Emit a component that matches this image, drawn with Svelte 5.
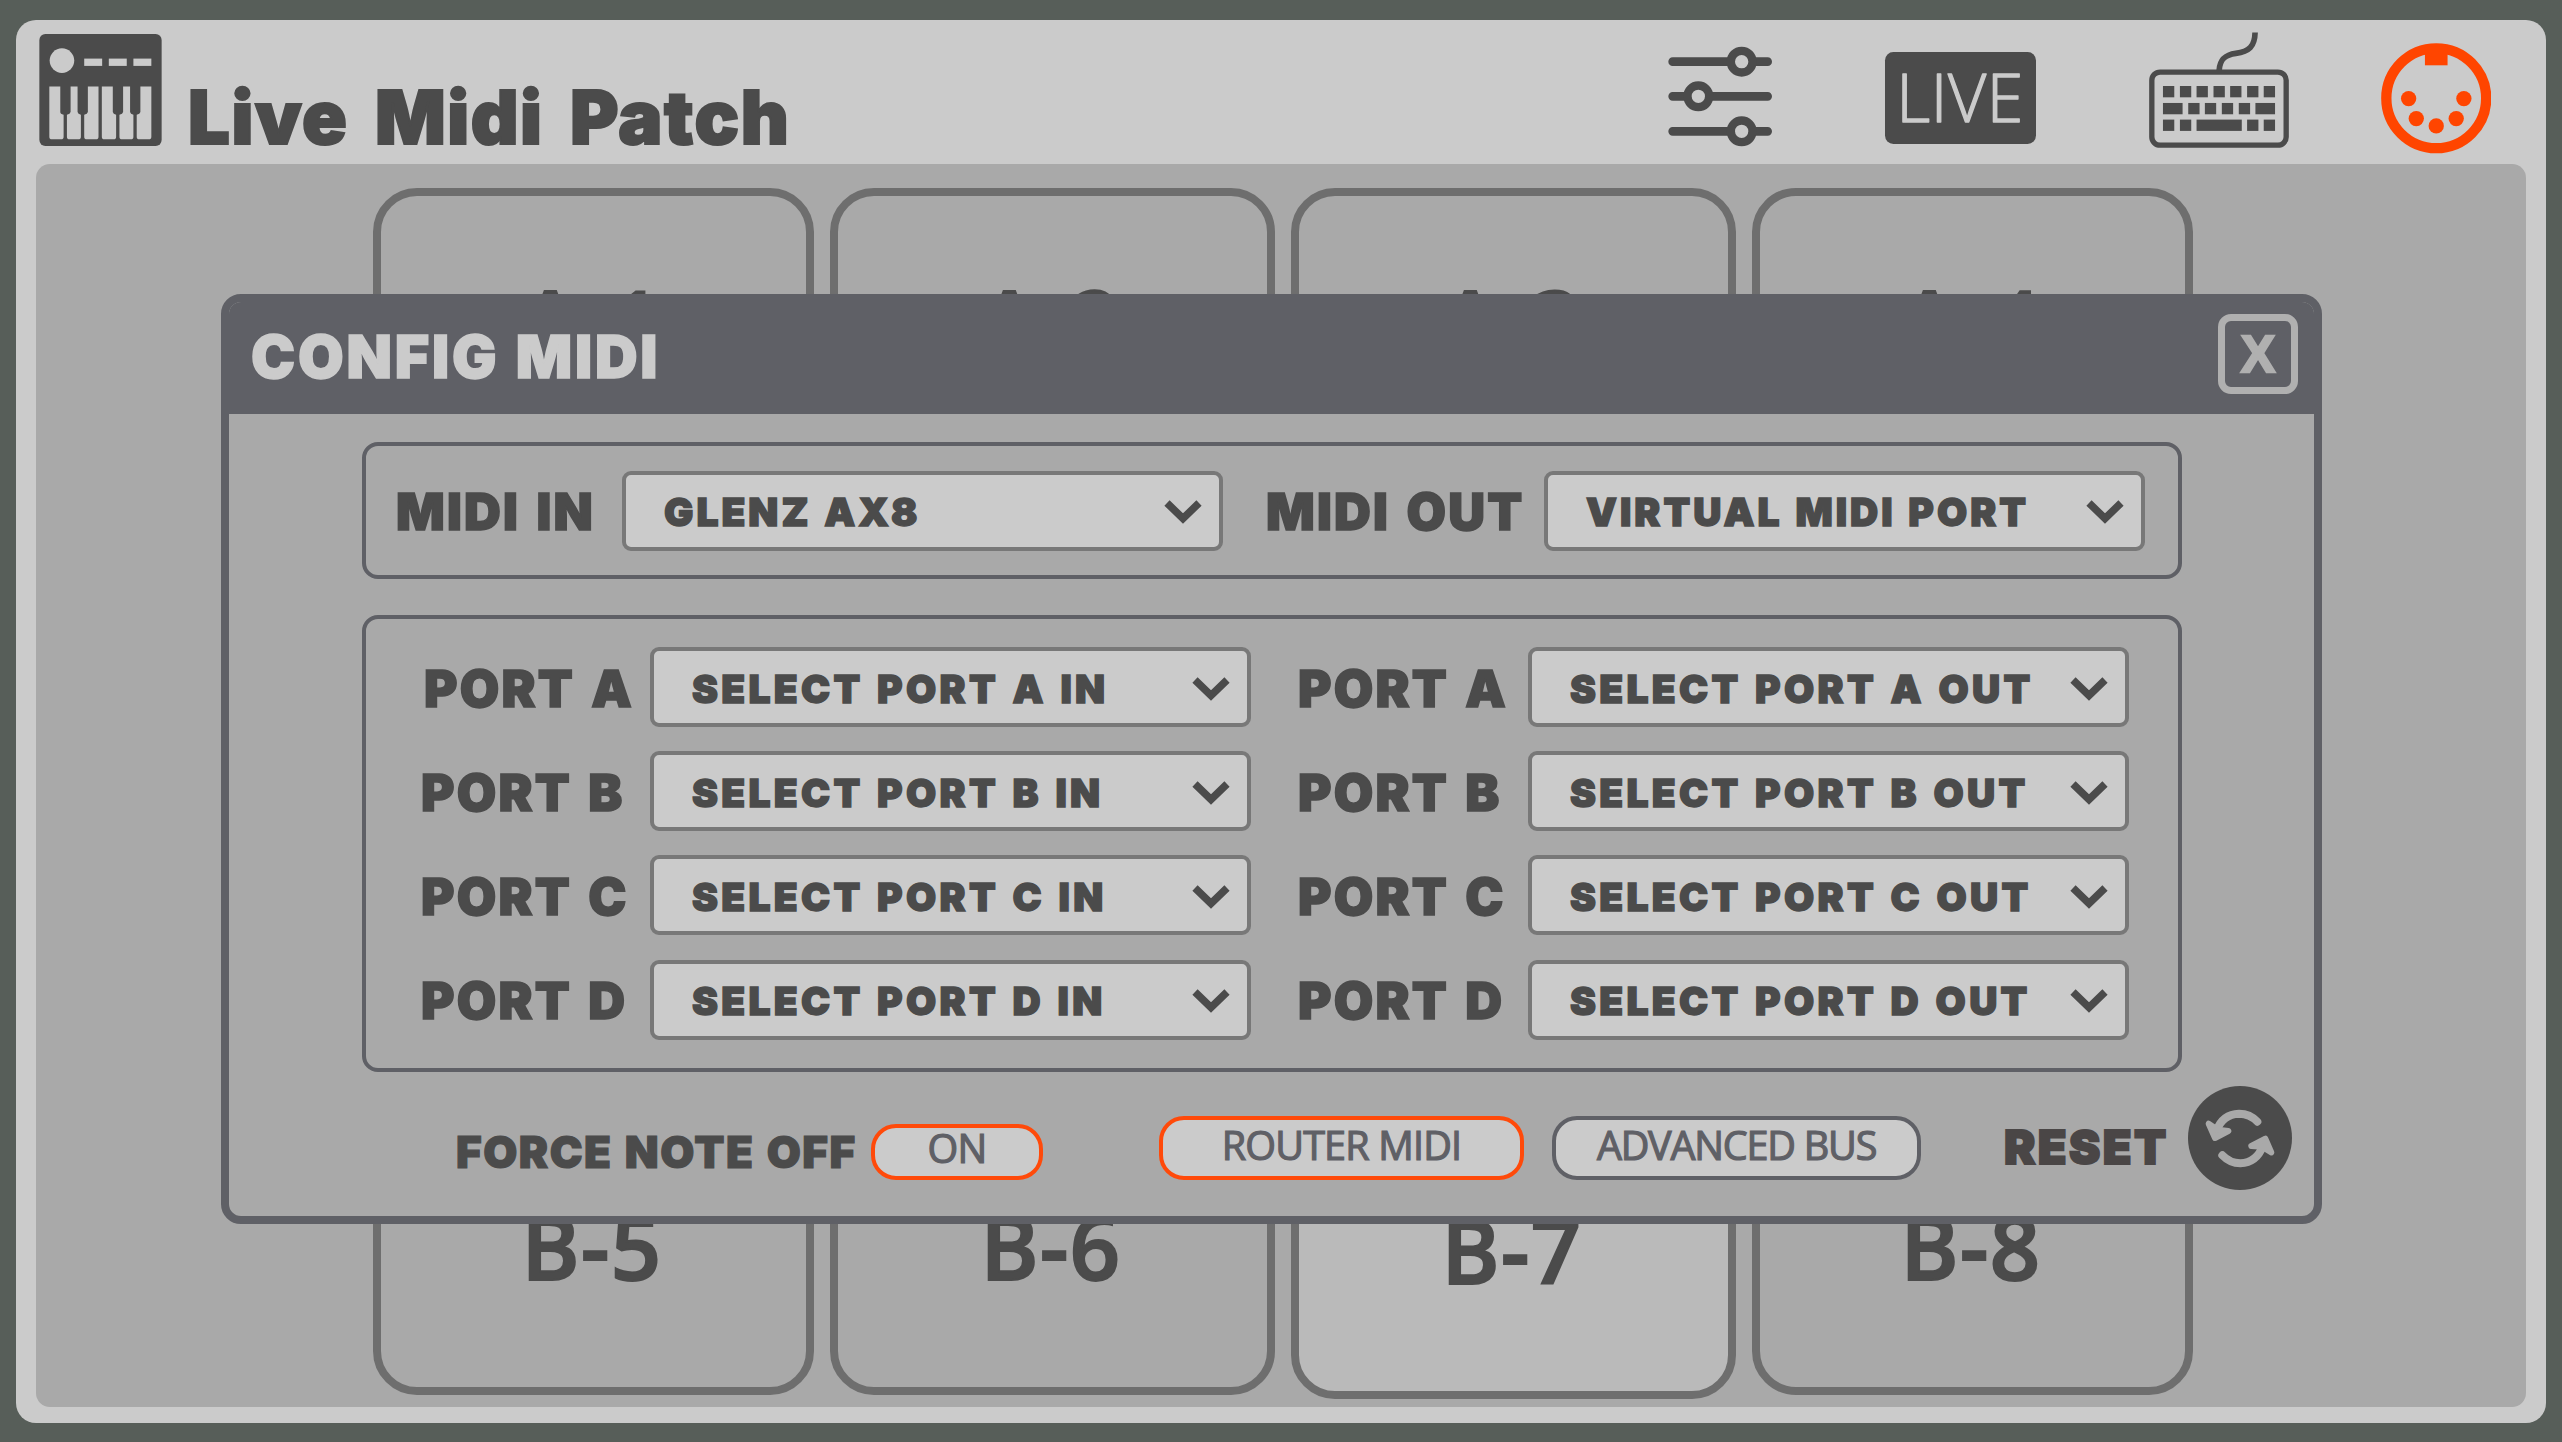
<script>
  const pads = [
    'A-1', 'A-2', 'A-3', 'A-4',
    'A-5', 'A-6', 'A-7', 'A-8',
    'B-1', 'B-2', 'B-3', 'B-4',
    'B-5', 'B-6', 'B-7', 'B-8',
  ];
  const ports = ['A', 'B', 'C', 'D'];

  let activePad = 'B-7';
  let midiIn = 'GLENZ AX8';
  let midiOut = 'VIRTUAL MIDI PORT';
  let forceNoteOff = true;
  let mode = 'router';
  let showConfig = true;

  // keyboard icon keys: x, y, width
  const keys = [
    [129, 197, 34], [180, 197, 34], [230, 197, 34], [281, 197, 34], [331, 197, 34], [382, 197, 34], [432, 197, 34],
    [129, 248, 59], [205, 248, 34], [255, 248, 34], [306, 248, 34], [357, 248, 34], [407, 248, 59],
    [129, 298, 34], [180, 298, 34], [230, 298, 136], [382, 298, 34], [432, 298, 34],
  ];
  const pins = [[864, 235], [887, 295], [947, 317], [1007, 295], [1030, 235]];
</script>

{#snippet select(text)}
  <button class="select">
    <span>{text}</span>
    <svg class="chevron" viewBox="0 0 38 25">
      <path d="M3 4 L19 19.5 L35 4" fill="none" stroke="#4b4b4b" stroke-width="7.5" />
    </svg>
  </button>
{/snippet}

<div class="page">
  <div class="app">
    <header>
      <svg class="logo" viewBox="58 41 368 337">
        <rect x="58" y="41" width="368" height="337" rx="18" fill="#4b4b4b" />
        <g fill="#cbcbcb">
          <circle cx="126" cy="121" r="37" />
          <rect x="193" y="115" width="54" height="22" />
          <rect x="267" y="115" width="54" height="22" />
          <rect x="341" y="115" width="54" height="22" />
          <path d="M88 199H121V276Q121 282 131 284V350Q131 358 123 358H96Q88 358 88 350Z" />
          <path d="M152 199H173V276Q174 282 183 284V350Q183 358 175 358H149Q141 358 141 350V284Q151 282 152 276Z" />
          <path d="M204 199H236V350Q236 358 228 358H201Q193 358 193 350V284Q203 282 204 276Z" />
          <path d="M246 199H279V276Q280 282 289 284V350Q289 358 281 358H254Q246 358 246 350Z" />
          <path d="M310 199H331V276Q332 282 341 284V350Q341 358 333 358H307Q299 358 299 350V284Q309 282 310 276Z" />
          <path d="M362 199H395V350Q395 358 387 358H359Q351 358 351 350V284Q361 282 362 276Z" />
        </g>
      </svg>
      <h1>Live Midi Patch</h1>

      <nav>
        <svg class="sliders" viewBox="54 77 312 303">
          <g stroke="#4b4b4b" stroke-width="26" stroke-linecap="round">
            <path d="M68 124H353M68 228H353M68 333H353" />
          </g>
          <g fill="#cbcbcb" stroke="#4b4b4b" stroke-width="25">
            <circle cx="275" cy="124" r="32.5" />
            <circle cx="145" cy="228" r="32.5" />
            <circle cx="275" cy="333" r="32.5" />
          </g>
        </svg>
        <svg class="live" viewBox="706 97 452 275">
          <rect x="706" y="97" width="452" height="275" rx="25" fill="#4b4b4b" />
          <text x="740" y="306" textLength="380" lengthAdjust="spacing">LIVE</text>
        </svg>
        <svg class="keyboard" viewBox="87 35 421 348">
          <rect x="95.500" y="155" width="404" height="220" rx="25" fill="none" stroke="#4b4b4b" stroke-width="16" />
          <path d="M298 150C300 115 318 103 348 99C388 94 405 78 406 36" fill="none" stroke="#4b4b4b" stroke-width="17" />
          {#each keys as [x, y, w]}
            <rect {x} {y} width={w} height="34" fill="#4b4b4b" />
          {/each}
        </svg>
        <svg class="din" viewBox="781 68 332 332">
          <circle cx="947" cy="234" r="150" fill="none" stroke="#ff4500" stroke-width="31" />
          <rect x="913" y="80" width="68" height="55" fill="#ff4500" />
          {#each pins as [cx, cy]}
            <circle {cx} {cy} r="23" fill="#ff4500" />
          {/each}
        </svg>
      </nav>
    </header>

    <main>
      <div class="pads">
        {#each pads as pad}
          <div class="pad" class:active={pad === activePad}>{pad}</div>
        {/each}
      </div>
    </main>
  </div>

  {#if showConfig}
    <div class="dialog">
      <div class="dialog-head">
        <h2>CONFIG MIDI</h2>
        <button class="close" on:click={() => (showConfig = false)}>X</button>
      </div>

      <div class="dialog-body">
        <section class="group main-ports">
          <span class="label">MIDI IN</span>
          {@render select(midiIn)}
          <span class="label out">MIDI OUT</span>
          {@render select(midiOut)}
        </section>

        <section class="group ports">
          {#each ports as port}
            <span class="label" class:first={port === 'A'}>PORT {port}</span>
            {@render select(`SELECT PORT ${port} IN`)}
            <span class="label out">PORT {port}</span>
            {@render select(`SELECT PORT ${port} OUT`)}
          {/each}
        </section>

        <footer>
          <span class="force">FORCE NOTE OFF</span>
          <button class="pill toggle" class:on={forceNoteOff} on:click={() => (forceNoteOff = !forceNoteOff)}>
            {forceNoteOff ? 'ON' : 'OFF'}
          </button>
          <button class="pill router" class:on={mode === 'router'} on:click={() => (mode = 'router')}>ROUTER MIDI</button>
          <button class="pill bus" class:on={mode === 'bus'} on:click={() => (mode = 'bus')}>ADVANCED BUS</button>
          <span class="reset">RESET</span>
          <svg class="reset-icon" viewBox="54 47 312 312">
            <circle cx="210" cy="203" r="156" fill="#4b4b4b" />
            <g fill="none" stroke="#a9a9a9" stroke-width="24" stroke-linecap="round">
              <path d="M262 154Q240 130 207 130Q158 132 140 180" />
              <path d="M157 255Q180 279 211 279Q260 276 278 228" />
            </g>
            <g fill="#a9a9a9" stroke="#a9a9a9" stroke-width="18" stroke-linecap="round" stroke-linejoin="round">
              <path d="M116 160L135 203L175 182L143 178Z" />
              <path d="M304 246L286 205L244 227L276 229Z" />
            </g>
          </svg>
        </footer>
      </div>
    </div>
  {/if}
</div>

<style>
  :global(body) { background: #575e59; }
  .page {
    position: relative;
    box-sizing: border-box;
    width: 2562px;
    height: 1442px;
    padding: 20px 16px 19px;
    background: #575e59;
    color: #4b4b4b;
    font-family: Inter, "Liberation Sans", sans-serif;
    overflow: hidden;
  }
  .page * { box-sizing: border-box; }
  h1, h2 { margin: 0; font-weight: 900; white-space: nowrap; }
  button { margin: 0; padding: 0; font: inherit; color: inherit; background: none; cursor: pointer; }
  svg { display: block; flex: none; }

  .app { display: flex; flex-direction: column; height: 100%; padding: 0 20px 16px; border-radius: 20px; background: #cbcbcb; }
  header { display: flex; align-items: flex-start; height: 144px; padding-left: 3px; }
  .logo { width: 123px; height: 112px; margin-top: 14px; }
  h1 { margin: 52px 0 0 26px; font-size: 74px; line-height: 90px; letter-spacing: 1.600px; word-spacing: 10px; -webkit-text-stroke: 2px #4b4b4b; }
  nav { display: flex; align-items: flex-start; margin-left: auto; padding-right: 35px; }
  .sliders { width: 104px; height: 101px; margin: 26px 113px 0 0; }
  .live { width: 151px; height: 92px; margin: 32px 113px 0 0; overflow: visible; }
  .live text { font-family: "Open Sans", sans-serif; font-size: 198px; font-weight: 300; fill: #cbcbcb; stroke: #cbcbcb; stroke-width: 4px; stroke-linejoin: round; }
  .keyboard { width: 140px; height: 116px; margin: 12px 92px 0 0; }
  .din { width: 110.500px; height: 110.500px; margin-top: 23px; }

  main { flex: 1; padding: 24px 0 12px 337px; border-radius: 14px; background: #a9a9a9; }
  .pads { display: grid; grid-template-columns: 441px 445px 445px 441px; grid-template-rows: 265px 1fr 1fr 298px; gap: 16px; height: 100%; }
  .pad {
    display: flex;
    align-items: center;
    justify-content: center;
    padding-right: 3px;
    border: 8px solid #6e6e6e;
    border-radius: 44px;
    font: 600 88px "Open Sans", sans-serif;
    letter-spacing: 1.500px;
    -webkit-text-stroke: 2px #4b4b4b;
  }
  .pad.active { background: #bababa; transform: translateY(4px); }

  .dialog { position: absolute; left: 221px; top: 294px; width: 2101px; height: 930px; border: 8px solid #5f6066; border-radius: 20px; background: #a9a9a9; overflow: hidden; }
  .dialog-head { display: flex; align-items: center; justify-content: space-between; height: 112px; padding: 0 16px 0 22px; background: #5f6066; color: #cbcbcb; }
  h2 { margin-bottom: 2px; font-size: 59px; line-height: 72px; letter-spacing: 2.800px; word-spacing: 2px; -webkit-text-stroke: 1.500px #cbcbcb; }
  .close { width: 80px; height: 80px; margin-bottom: 8px; border: 7px solid #b0b0b0; border-radius: 13px; color: #b0b0b0; font: bold 51px "Liberation Sans", sans-serif; -webkit-text-stroke: 2.500px #b0b0b0; }

  .dialog-body { padding: 28px 0 0 133px; }
  .group { display: grid; align-items: center; width: 1820px; border: 4px solid #5f6066; border-radius: 16px; }
  .main-ports { grid-template-columns: 225px 601px 321px 601px; height: 137px; padding-left: 31px; }
  .ports { grid-template-columns: 229px 601px 277px 601px; align-content: start; row-gap: 24.200px; height: 457px; margin-top: 35.500px; padding: 28.500px 0 0 55px; }
  .label { padding-top: 3px; font-size: 51px; font-weight: 900; line-height: 60px; letter-spacing: 2.200px; word-spacing: 4px; white-space: nowrap; -webkit-text-stroke: 1.500px #4b4b4b; }
  .main-ports .label { margin-left: -1px; letter-spacing: 2.200px; }
  .main-ports .out { padding-left: 44px; }
  .ports .out { padding-left: 47px; }
  .first { padding-left: 3px; }

  .select {
    display: flex;
    align-items: center;
    justify-content: space-between;
    height: 80px;
    padding: 2px 17px 0 38px;
    border: 4px solid #787878;
    border-radius: 9px;
    background: #cbcbcb;
    font-size: 39px;
    font-weight: 900;
    letter-spacing: 3.300px;
    word-spacing: 2.500px;
    white-space: nowrap;
    -webkit-text-stroke: 1.400px #4b4b4b;
  }
  .main-ports .select { letter-spacing: 3px; word-spacing: 2px; }
  .chevron { width: 38px; height: 25px; }

  footer { display: flex; align-items: flex-start; padding-left: 94px; white-space: nowrap; }
  .force { flex: none; width: 415px; margin-top: 50px; font-size: 44px; font-weight: 900; line-height: 60px; letter-spacing: 1.500px; word-spacing: 2px; -webkit-text-stroke: 1.200px #4b4b4b; }
  .pill {
    flex: none;
    height: 64px;
    margin-top: 44px;
    padding-bottom: 6px;
    border: 4px solid #5f6066;
    border-radius: 25px;
    background: #cbcbcb;
    color: #5f6066;
    font: 500 39.500px/50px "Open Sans", sans-serif;
    letter-spacing: -0.800px;
    -webkit-text-stroke: 1.200px #5f6066;
  }
  .pill.on { border-color: #ff4a0a; }
  .toggle { width: 172px; height: 56px; margin-top: 52px; padding-bottom: 7px; line-height: 41px; }
  .router { width: 365px; margin-left: 116px; }
  .bus { width: 369px; margin-left: 28px; letter-spacing: -1.200px; }
  .reset { flex: none; width: 184px; margin: 45px 0 0 83px; color: #4a4646; font-size: 47px; font-weight: 900; line-height: 60px; letter-spacing: 2.400px; -webkit-text-stroke: 2px #4a4646; }
  .reset-icon { width: 104px; height: 104px; margin-top: 14px; }
</style>
